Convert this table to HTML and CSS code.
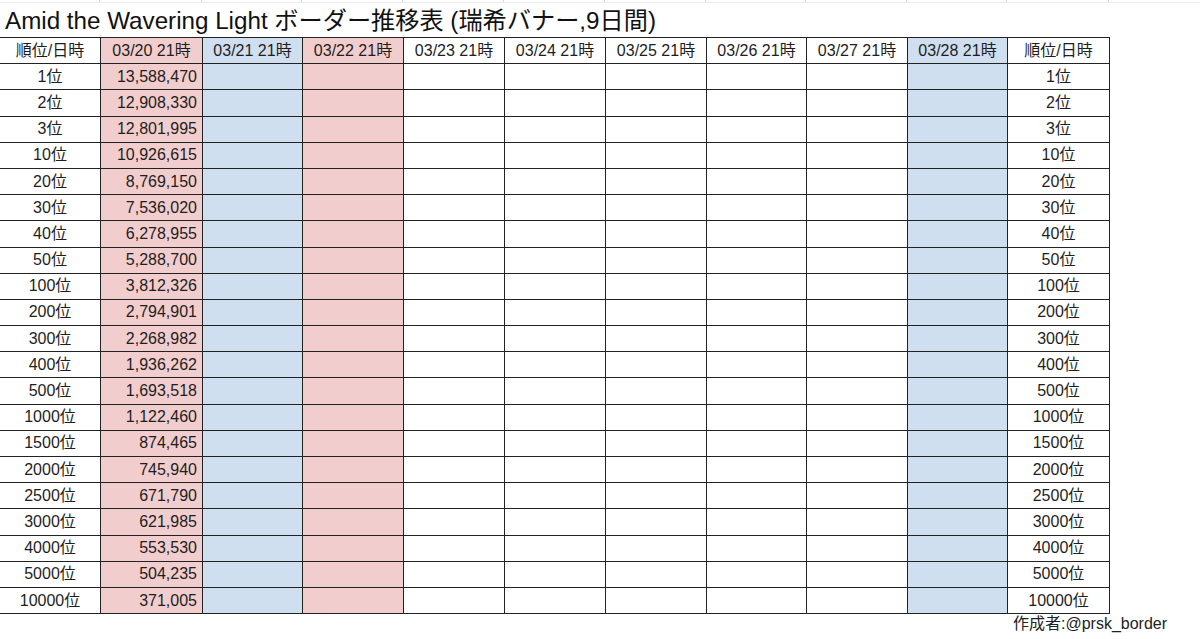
FILE: index.html
```html
<!DOCTYPE html>
<html lang="ja">
<head>
<meta charset="utf-8">
<title>Amid the Wavering Light ボーダー推移表</title>
<link rel="stylesheet" href="styles.css">
</head>
<body>
<div class="page">
  <div class="grid-top">
    <span></span><span></span><span></span><span></span><span></span><span></span><span></span><span></span><span></span><span></span><span></span>
  </div>
  <h1 class="title">Amid the Wavering Light ボーダー推移表 (瑞希バナー,9日間)</h1>
  <table class="border-table">
    <colgroup>
      <col class="w101"><col class="w102"><col class="w100"><col class="w101"><col class="w101"><col class="w101">
      <col class="w101"><col class="w100"><col class="w101"><col class="w100"><col class="w102">
    </colgroup>
    <thead>
      <tr>
        <th class="rank">順位/日時</th>
        <th class="pink">03/20 21時</th>
        <th class="blue">03/21 21時</th>
        <th class="pink">03/22 21時</th>
        <th>03/23 21時</th>
        <th>03/24 21時</th>
        <th>03/25 21時</th>
        <th>03/26 21時</th>
        <th>03/27 21時</th>
        <th class="blue">03/28 21時</th>
        <th class="rank">順位/日時</th>
      </tr>
    </thead>
    <tbody id="rows"></tbody>
  </table>
  <div class="credit">作成者:@prsk_border</div>
</div>
<script src="app.js"></script>
</body>
</html>
```

FILE: app.js
```js
const data = [
  ["1位", "13,588,470"], ["2位", "12,908,330"], ["3位", "12,801,995"],
  ["10位", "10,926,615"], ["20位", "8,769,150"], ["30位", "7,536,020"],
  ["40位", "6,278,955"], ["50位", "5,288,700"], ["100位", "3,812,326"],
  ["200位", "2,794,901"], ["300位", "2,268,982"], ["400位", "1,936,262"],
  ["500位", "1,693,518"], ["1000位", "1,122,460"], ["1500位", "874,465"],
  ["2000位", "745,940"], ["2500位", "671,790"], ["3000位", "621,985"],
  ["4000位", "553,530"], ["5000位", "504,235"], ["10000位", "371,005"]
];
const cls = ["pink", "blue", "pink", "", "", "", "", "", "blue"];
const tbody = document.getElementById("rows");
for (const [rank, val] of data) {
  const tr = document.createElement("tr");
  let html = `<td class="rank">${rank}</td>`;
  cls.forEach((c, i) => {
    html += `<td class="num ${c}">${i === 0 ? val : ""}</td>`;
  });
  html += `<td class="rank">${rank}</td>`;
  tr.innerHTML = html;
  tbody.appendChild(tr);
}
```

FILE: styles.css
```css
html, body {
  margin: 0;
  padding: 0;
  background: #ffffff;
}
body {
  font-family: "Liberation Sans", Arial, "Noto Sans CJK JP", sans-serif;
  color: #1e1e1e;
}
.page {
  width: 1200px;
  height: 639px;
  overflow: hidden;
  position: relative;
}
.grid-top {
  display: grid;
  grid-template-columns: 100px 102px 100px 101px 101px 101px 101px 100px 101px 100px 102px;
  height: 2px;
  border-bottom: 1px solid #ececec;
}
.grid-top span {
  border-right: 1px solid #d8d8d8;
}
.title {
  margin: 0;
  padding: 4px 0 0 5px;
  height: 30px;
  font-size: 24.2px;
  font-weight: normal;
  line-height: 28px;
  color: #111;
  white-space: nowrap;
}
.border-table {
  border-collapse: collapse;
  table-layout: fixed;
  width: 1110px;
  margin-left: -1px;
  font-size: 16px;
}
.w100 { width: 100px; }
.w101 { width: 101px; }
.w102 { width: 102px; }
.border-table th,
.border-table td {
  border: 1px solid #222;
  height: 25.2px;
  padding: 0 5px;
  font-weight: normal;
  text-align: center;
  white-space: nowrap;
  line-height: 18px;
}
.border-table td.num {
  text-align: right;
}
.pink { background: #f2cdcd; }
.blue { background: #cfdff0; }
.credit {
  position: absolute;
  left: 1013px;
  top: 614px;
  font-size: 16px;
  line-height: 20px;
  color: #222;
  white-space: nowrap;
}
```
